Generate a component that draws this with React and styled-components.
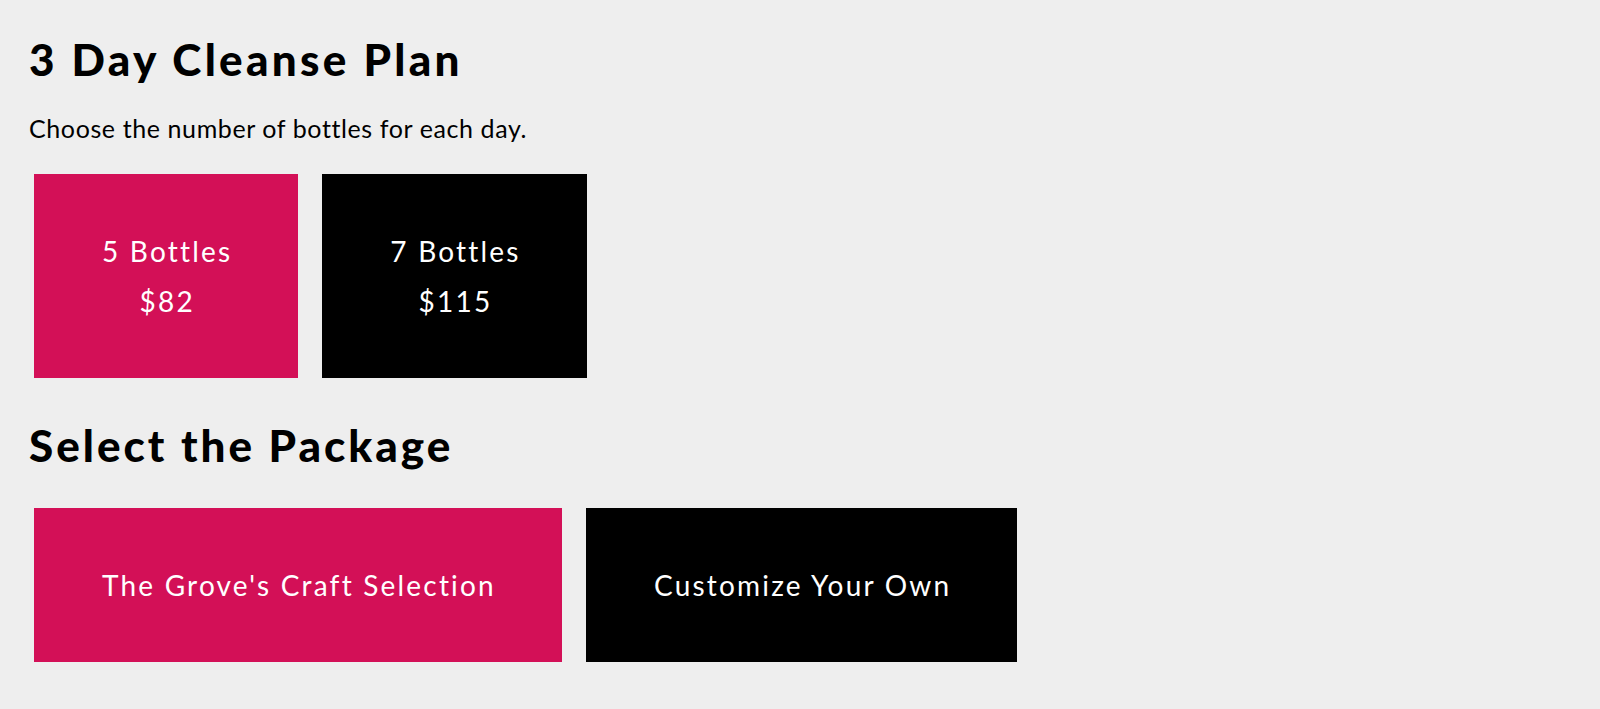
import React, { useState } from 'react';
import styled, { createGlobalStyle } from 'styled-components';

const GlobalStyle = createGlobalStyle`
    body {
        margin: 0;
        background: #eeeeee;
        font-family: Lato, 'Liberation Sans', sans-serif;
        font-variant-ligatures: none;
    }
`;

const Page = styled.div`
    padding: 37px 29px 40px;
`;

const Title = styled.h1`
    font-family: Lato, 'Liberation Sans', sans-serif;
    font-weight: 900;
    font-size: 44px;
    line-height: 44px;
    letter-spacing: 3.3px;
    color: #000;
    margin: 0;
`;

const SectionTitle = styled(Title).attrs({ as: 'h2' })`
    letter-spacing: 3px;
    margin-top: 45px;
`;

const Intro = styled.p`
    font-size: 25px;
    line-height: 30px;
    letter-spacing: 0.6px;
    color: #000;
    margin: 32px 0 0;
`;

const OptionRow = styled.div`
    display: flex;
    align-items: flex-start;
    gap: 24px;
    padding-left: 5px;
    margin-top: ${({ $top }) => $top}px;
`;

const Option = styled.button`
    display: flex;
    flex-direction: column;
    align-items: center;
    padding: 52px 66px 52px 68px;
    border: 0;
    background: ${({ $active }) => ($active ? '#d31057' : '#000')};
    color: #fff;
    font-family: Lato, 'Liberation Sans', sans-serif;
    font-variant-ligatures: none;
    font-size: 28px;
    line-height: 50px;
    letter-spacing: 2.2px;
    cursor: pointer;
`;

const bottles = [
    { label: '5 Bottles', price: '$82' },
    { label: '7 Bottles', price: '$115' },
];

const packages = ["The Grove's Craft Selection", 'Customize Your Own'];

export default function App() {
    const [bottle, setBottle] = useState(0);
    const [pack, setPack] = useState(0);

    return (
        <Page>
            <GlobalStyle />
            <Title>3 Day Cleanse Plan</Title>
            <Intro>Choose the number of bottles for each day.</Intro>
            <OptionRow $top={31}>
                {bottles.map((b, i) => (
                    <Option key={b.label} $active={bottle === i} onClick={() => setBottle(i)}>
                        <span>{b.label}</span>
                        <span>{b.price}</span>
                    </Option>
                ))}
            </OptionRow>
            <SectionTitle>Select the Package</SectionTitle>
            <OptionRow $top={41}>
                {packages.map((p, i) => (
                    <Option key={p} $active={pack === i} onClick={() => setPack(i)}>
                        <span>{p}</span>
                    </Option>
                ))}
            </OptionRow>
        </Page>
    );
}
